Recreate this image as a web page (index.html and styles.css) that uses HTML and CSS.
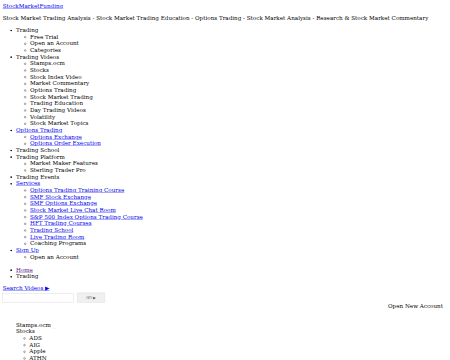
FILE: index.html
```html
<!DOCTYPE html>
<html lang="en">
<head>
    <meta charset="UTF-8">
    <title>StockMarketFunding - Trading</title>
    <link rel="stylesheet" href="styles.css">
</head>
<body>
<div class="page">
    <div class="site-logo"><a href="#">StockMarketFunding</a></div>
    <p class="tagline">Stock Market Trading Analysis - Stock Market Trading Education - Options Trading - Stock Market Analysis - Research &amp; Stock Market Commentary</p>

    <ul class="main-nav">
        <li>Trading
            <ul>
                <li>Free Trial</li>
                <li>Open an Account</li>
                <li>Categories</li>
            </ul>
        </li>
        <li>Trading Videos
            <ul>
                <li>Stamps.ocm</li>
                <li>Stocks</li>
                <li>Stock Index Video</li>
                <li>Market Commentary</li>
                <li>Options Trading</li>
                <li>Stock Market Trading</li>
                <li>Trading Education</li>
                <li>Day Trading Videos</li>
                <li>Volatility</li>
                <li>Stock Market Topics</li>
            </ul>
        </li>
        <li><a href="#">Options Trading</a>
            <ul>
                <li><a href="#">Options Exchange</a></li>
                <li><a href="#">Options Order Execution</a></li>
            </ul>
        </li>
        <li>Trading School</li>
        <li>Trading Platform
            <ul>
                <li>Market Maker Features</li>
                <li>Sterling Trader Pro</li>
            </ul>
        </li>
        <li>Trading Events</li>
        <li><a href="#">Services</a>
            <ul>
                <li><a href="#">Options Trading Training Course</a></li>
                <li><a href="#">SMF Stock Exchange</a></li>
                <li><a href="#">SMF Options Exchange</a></li>
                <li><a href="#">Stock Market Live Chat Room</a></li>
                <li><a href="#">S&amp;P 500 Index Options Trading Course</a></li>
                <li><a href="#">HFT Trading Courses</a></li>
                <li><a href="#">Trading School</a></li>
                <li><a href="#">Live Trading Room</a></li>
                <li>Coaching Programs</li>
            </ul>
        </li>
        <li><a href="#">Sign Up</a>
            <ul>
                <li>Open an Account</li>
            </ul>
        </li>
    </ul>

    <ul class="crumbs">
        <li><a class="seen" href="#">Home</a></li>
        <li>Trading</li>
    </ul>

    <div class="search">
        <a class="search-title" href="#">Search Videos &#9654;</a>
        <form class="search-form" action="#">
            <input class="search-input" type="text" name="q">
            <button class="search-go" type="submit">GO &#9654;</button>
        </form>
    </div>

    <div class="account-link">Open New Account</div>

    <ul class="topics">
        <li>Stamps.ocm <span class="caret">_</span></li>
        <li>Stocks
            <ul>
                <li>ADS</li>
                <li>AIG</li>
                <li>Apple</li>
                <li>ATHN</li>
                <li>BIDU</li>
            </ul>
        </li>
    </ul>
</div>
</body>
</html>
```

FILE: styles.css
```css
html, body {
    margin: 0;
    overflow: hidden;
    background-color: #ffffff;
}
/* the page is laid out at full size and shown at a third */
.page {
    width: 1334px;
    padding: 8px;
    transform: scale(0.3333);
    transform-origin: 0 0;
    font-family: 'DejaVu Serif', serif;
    font-size: 16.85px;
    line-height: 20px;
    color: #000000;
}
a {
    color: #0000ee;
}
a.seen {
    color: #551a8b;
}
.tagline {
    margin: 16px 0;
}
.main-nav, .crumbs {
    margin: 16px 0;
    padding-left: 40px;
}
.crumbs {
    margin-top: 19px;
}
.main-nav ul {
    list-style: circle;
    padding-left: 42px;
}
.search {
    margin-top: 16px;
}
.search-form {
    display: flex;
    align-items: center;
    gap: 9px;
    margin-top: 3px;
}
.search-input {
    width: 214px;
    height: 28px;
    box-sizing: border-box;
    border: 1px solid #c8c8c8;
    padding: 2px 4px;
}
.search-go {
    width: 84px;
    height: 30px;
    font-family: 'DejaVu Sans', sans-serif;
    font-size: 11px;
    color: #555555;
    background-color: #f0f0f0;
    border: 1px solid #d4d4d4;
    border-radius: 2px;
}
.account-link {
    text-align: right;
    padding-right: 13px;
}
.topics {
    list-style: none;
    margin: 36px 0 0;
    padding-left: 40px;
}
.topics ul {
    list-style: circle;
    padding-left: 40px;
}
.caret {
    color: #cccccc;
}
```
